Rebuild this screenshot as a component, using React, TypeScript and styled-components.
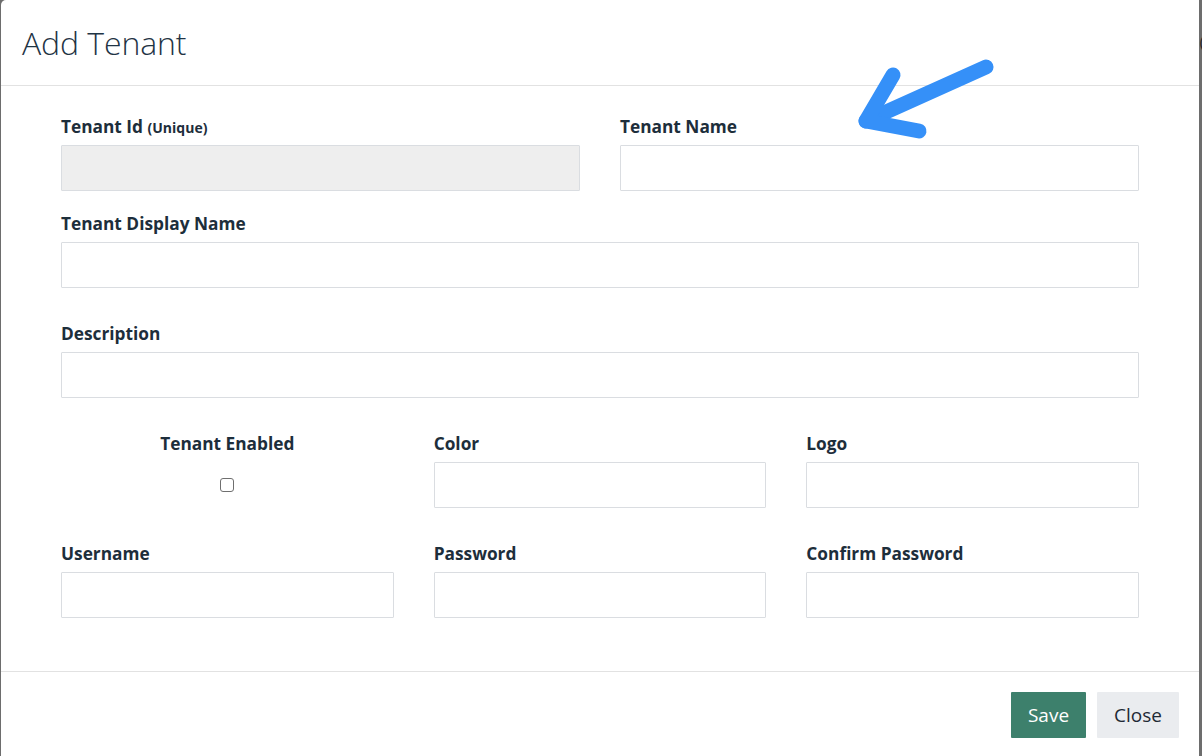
import React from 'react';
import styled, { createGlobalStyle } from 'styled-components';

const GlobalStyle = createGlobalStyle`
    html, body {
        margin: 0;
        padding: 0;
        background: #6d6d6d;
        overflow: hidden;
    }
    body {
        font-family: "Open Sans", "Noto Sans", Arial, sans-serif;
    }
`

const Modal = styled.div`
    position: relative;
    width: 1198px;
    height: 756px;
    margin-left: 1px;
    background: #ffffff;
    border-top-left-radius: 5px;
    display: flex;
    flex-direction: column;
`

const Header = styled.div`
    position: relative;
    height: 85px;
    border-bottom: 1px solid #e2e2e2;
    display: flex;
    align-items: center;
    padding: 0 21px;
`

const Title = styled.h1`
    margin: 0;
    font-size: 32px;
    font-weight: 300;
    color: #1f3445;
    letter-spacing: -0.1px;
`

const EdgeGlyph = styled.span`
    position: absolute;
    right: -5px;
    top: 35px;
    font-size: 14px;
    color: #222;
    line-height: 1;
`

const Body = styled.div`
    padding: 28px 60px 0 60px;
    height: 586px;
    box-sizing: border-box;
    border-bottom: 1px solid #e2e2e2;
`

const Row = styled.div<{ $cols: number; $gap: number }>`
    display: grid;
    grid-template-columns: repeat(${p => p.$cols}, 1fr);
    column-gap: 40px;
    margin-bottom: ${p => p.$gap}px;
`

const Field = styled.div<{ $center?: boolean }>`
    display: flex;
    flex-direction: column;
    align-items: ${p => (p.$center ? 'center' : 'stretch')};
`

const Label = styled.label`
    display: block;
    height: 24px;
    font-size: 17.3px;
    font-weight: 700;
    color: #1d2e3b;
    line-height: 26px;
    margin-bottom: 7px;
    white-space: nowrap;
`

const Small = styled.span`
    font-size: 14px;
    font-weight: 700;
    line-height: 1;
`

const Input = styled.input<{ $disabled?: boolean }>`
    height: 46px;
    box-sizing: border-box;
    border: 1px solid #dadde1;
    border-radius: 1px;
    background: ${p => (p.$disabled ? '#eeeeee' : '#ffffff')};
    padding: 0 12px;
    font-family: inherit;
    font-size: 15px;
    outline: none;
`

const Check = styled.span`
    display: block;
    width: 12px;
    height: 12px;
    margin-top: 16px;
    border: 1px solid #6f6f6f;
    border-radius: 3px;
    background: #fff;
`

const Footer = styled.div`
    flex: 1;
    display: flex;
    justify-content: flex-end;
    align-items: flex-start;
    gap: 11px;
    padding: 20px 20px 0 0;
`

const Button = styled.button<{ $primary?: boolean }>`
    height: 46px;
    padding: 0 17px;
    border: none;
    border-radius: 1px;
    font-family: inherit;
    font-size: 19px;
    background: ${p => (p.$primary ? '#3d806c' : '#eaecef')};
    color: ${p => (p.$primary ? '#ffffff' : '#1e2a35')};
`

const Arrow = styled.svg`
    position: absolute;
    left: 848px;
    top: 55px;
`

const App = () => {
    return (
        <>
            <GlobalStyle />
            <Modal>
                <Header>
                    <Title>Add Tenant</Title>
                    <EdgeGlyph>(</EdgeGlyph>
                </Header>
                <Body>
                    <Row $cols={2} $gap={20}>
                        <Field>
                            <Label>Tenant Id <Small>(Unique)</Small></Label>
                            <Input $disabled disabled />
                        </Field>
                        <Field>
                            <Label>Tenant Name</Label>
                            <Input />
                        </Field>
                    </Row>
                    <Row $cols={1} $gap={33}>
                        <Field>
                            <Label>Tenant Display Name</Label>
                            <Input />
                        </Field>
                    </Row>
                    <Row $cols={1} $gap={33}>
                        <Field>
                            <Label>Description</Label>
                            <Input />
                        </Field>
                    </Row>
                    <Row $cols={3} $gap={33}>
                        <Field $center>
                            <Label>Tenant Enabled</Label>
                            <Check />
                        </Field>
                        <Field>
                            <Label>Color</Label>
                            <Input />
                        </Field>
                        <Field>
                            <Label>Logo</Label>
                            <Input />
                        </Field>
                    </Row>
                    <Row $cols={3} $gap={0}>
                        <Field>
                            <Label>Username</Label>
                            <Input />
                        </Field>
                        <Field>
                            <Label>Password</Label>
                            <Input type='password' />
                        </Field>
                        <Field>
                            <Label>Confirm Password</Label>
                            <Input type='password' />
                        </Field>
                    </Row>
                </Body>
                <Footer>
                    <Button $primary>Save</Button>
                    <Button>Close</Button>
                </Footer>
                <Arrow width='150' height='90' viewBox='0 0 150 90'>
                    <g stroke='#3590f8' strokeWidth='15' strokeLinecap='round' strokeLinejoin='round' fill='none'>
                        <path d='M137 12 L17 66' />
                        <path d='M44 20 L17 66 L70 76' />
                    </g>
                </Arrow>
            </Modal>
        </>
    );
};

export default App;
